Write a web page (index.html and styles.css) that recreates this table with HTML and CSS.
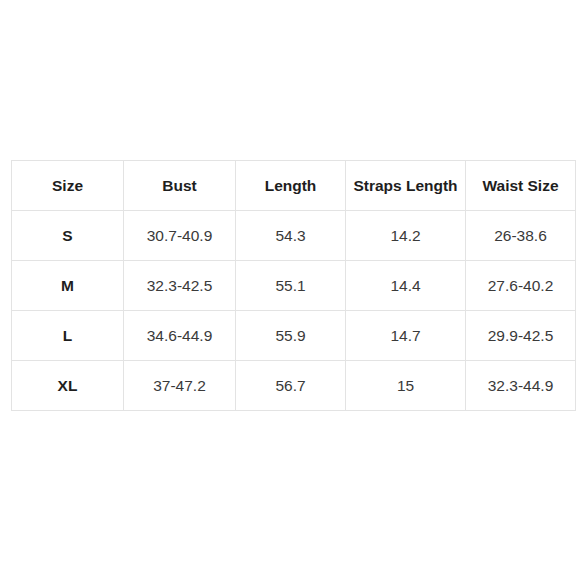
FILE: index.html
```html
<!DOCTYPE html>
<html>
<head>
<meta charset="utf-8">
<link rel="stylesheet" href="styles.css">
</head>
<body>
<div class="page">
<table class="size-table">
<colgroup>
<col class="c1"><col class="c2"><col class="c3"><col class="c4"><col class="c5">
</colgroup>
<thead>
<tr><th>Size</th><th>Bust</th><th>Length</th><th>Straps Length</th><th>Waist Size</th></tr>
</thead>
<tbody>
<tr><th>S</th><td>30.7-40.9</td><td>54.3</td><td>14.2</td><td>26-38.6</td></tr>
<tr><th>M</th><td>32.3-42.5</td><td>55.1</td><td>14.4</td><td>27.6-40.2</td></tr>
<tr><th>L</th><td>34.6-44.9</td><td>55.9</td><td>14.7</td><td>29.9-42.5</td></tr>
<tr><th>XL</th><td>37-47.2</td><td>56.7</td><td>15</td><td>32.3-44.9</td></tr>
</tbody>
</table>
</div>
</body>
</html>
```
FILE: styles.css
```css
html, body {
  margin: 0;
  padding: 0;
  background: #ffffff;
}
.page {
  width: 580px;
  height: 580px;
  padding: 160px 0 0 11px;
  box-sizing: border-box;
}
.size-table {
  border-collapse: collapse;
  table-layout: fixed;
  width: 565px;
  font-family: "Liberation Sans", Arial, sans-serif;
  font-size: 15.5px;
}
.c1 { width: 112px; }
.c2 { width: 112px; }
.c3 { width: 110px; }
.c4 { width: 120px; }
.c5 { width: 110px; }
.size-table tr {
  height: 50px;
}
.size-table th,
.size-table td {
  border: 1px solid #e3e3e3;
  text-align: center;
  vertical-align: middle;
  padding: 0;
  white-space: nowrap;
}
.size-table th {
  font-weight: bold;
  color: #1e1e1e;
}
.size-table td {
  font-weight: normal;
  color: #3a3a3a;
}
```
